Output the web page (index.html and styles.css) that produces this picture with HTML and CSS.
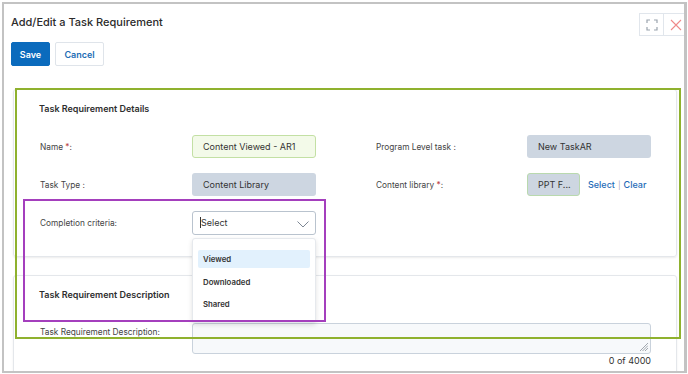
FILE: index.html
```html
<!DOCTYPE html>
<html lang="en">
<head>
    <meta charset="UTF-8">
    <meta name="viewport" content="width=device-width, initial-scale=1.0">
    <title>Add/Edit a Task Requirement</title>
    <link rel="stylesheet" href="styles.css">
</head>
<body>
    <div class="modal">
        <div class="modal-head">
            <h1>Add/Edit a Task Requirement</h1>
            <div class="win-tools">
                <span class="tool">
                    <svg width="12" height="12" viewBox="0 0 12 12" fill="none" stroke="#9aa3ad" stroke-width="1.2">
                        <path d="M1 4V1h3M8 1h3v3M11 8v3H8M4 11H1V8"/>
                    </svg>
                </span>
                <span class="tool">
                    <svg width="12" height="12" viewBox="0 0 12 12" fill="none" stroke="#ef8a8a" stroke-width="1.1">
                        <path d="M1 1l10 10M11 1L1 11"/>
                    </svg>
                </span>
            </div>
        </div>

        <div class="actions">
            <button class="btn btn-primary">Save</button>
            <button class="btn btn-light">Cancel</button>
        </div>

        <div class="card">
            <h2>Task Requirement Details</h2>
            <div class="form-grid">
                <label>Name <span class="req">*</span>:</label>
                <div class="field field-ok">Content Viewed - AR1</div>
                <label>Program Level task :</label>
                <div class="field field-ro">New TaskAR</div>

                <label>Task Type :</label>
                <div class="field field-ro">Content Library</div>
                <label>Content library <span class="req">*</span>:</label>
                <div class="lib-row">
                    <div class="field field-ro field-short">PPT F...</div>
                    <a class="link">Select</a><span class="sep">|</span><a class="link">Clear</a>
                </div>

                <label>Completion criteria:</label>
                <div class="select-wrap">
                    <div class="field select"><span class="caret"></span>Select
                        <svg class="chev" width="12" height="7" viewBox="0 0 12 7" fill="none" stroke="#7d8794" stroke-width="1">
                            <path d="M0.5 0.5L6 6L11.5 0.5"/>
                        </svg>
                    </div>
                    <ul class="menu">
                        <li class="active">Viewed</li>
                        <li>Downloaded</li>
                        <li>Shared</li>
                    </ul>
                </div>
            </div>
        </div>

        <div class="card card-desc">
            <h2>Task Requirement Description</h2>
            <div class="desc-row">
                <label>Task Requirement Description:</label>
                <div class="desc-box">
                    <div class="textarea">
                        <svg class="grip" width="9" height="9" viewBox="0 0 9 9" stroke="#8a929b" stroke-width="0.8">
                            <path d="M9 1L1 9M9 3.5L3.5 9M9 6L6 9"/>
                        </svg>
                    </div>
                    <div class="count">0 of 4000</div>
                </div>
            </div>
        </div>
    </div>

    <div class="mark mark-green"></div>
    <div class="mark mark-purple"></div>
</body>
</html>
```

FILE: styles.css
```css
body { margin: 0; font-family: Inter, "Noto Sans", sans-serif; color: #333; background: #fff; position: relative; width: 688px; height: 374px; overflow: hidden; }

.modal { margin: 2px; width: 680px; height: 367px; border: 2px solid #c3c3c3; border-right-width: 3px; overflow: hidden; background: #fff; }

.modal-head { display: flex; justify-content: space-between; align-items: flex-start; }
.modal-head h1 { margin: 11px 0 0 7px; font-size: 11px; font-weight: 500; line-height: 14px; color: #2b2b2b; }
.win-tools { display: flex; margin-top: 9px; margin-right: -4px; }
.tool { width: 23px; height: 21px; border: 1px solid #e1e6ec; display: flex; align-items: center; justify-content: center; }
.tool + .tool { border-left: none; }

.actions { display: flex; gap: 5px; margin: 6px 0 0 7px; }
.btn { font-family: Inter, sans-serif; font-size: 9px; font-weight: 600; height: 24px; border-radius: 2px; padding: 0; cursor: pointer; }
.btn-primary { width: 39px; background: #0b6bbd; color: #fff; border: 1px solid #0b6bbd; }
.btn-light { width: 49px; background: #fff; color: #1d6db5; border: 1px solid #dfe4ea; }

.card { margin: 23px 7px 0 9px; height: 154px; padding: 12px 0 0 25px; border: 1px solid #e4e7eb; border-radius: 3px; box-shadow: 0 1px 2px rgba(0,0,0,0.08); }
.card h2 { margin: 0; font-size: 9px; font-weight: 600; line-height: 14px; color: #2e2e2e; }
.card-desc { margin-top: 18px; height: 120px; }

.form-grid { display: grid; grid-template-columns: 153px 183px 152px auto; row-gap: 15px; margin-top: 19px; align-items: center; }
.form-grid label, .desc-row label { font-size: 8.3px; color: #444; padding-left: 1px; }
.req { color: #b44; }

.field { height: 23px; box-sizing: border-box; width: 124px; border-radius: 3px; font-size: 9px; line-height: 21px; padding-left: 10px; color: #333; border: 1px solid transparent; }
.field-ok { background: #f3fae9; border-color: #c3e0a4; }
.field-ro { background: #cdd6e1; }
.field-short { width: 53px; border-color: #b9d9ae; }

.lib-row { display: flex; align-items: center; }
.link { color: #1f6cb8; font-size: 9px; font-weight: 500; }
.lib-row .field + .link { margin-left: 8px; }
.sep { color: #aab; font-size: 8px; margin: 0 3px; }

.select-wrap { position: relative; }
.select { background: #fff; border-color: #b9c3ce; height: 24px; position: relative; padding-left: 7px; }
.caret { display: inline-block; width: 1px; height: 11px; background: #333; vertical-align: -2px; }
.chev { position: absolute; right: 6px; top: 9px; }

.menu { position: absolute; left: 0; top: 27px; width: 124px; box-sizing: border-box; margin: 0; padding: 11px 5px 9px 5px; list-style: none; background: #fff; border: 1px solid #e6e9ed; border-radius: 3px; box-shadow: 0 2px 5px rgba(0,0,0,0.12); z-index: 2; }
.menu li { height: 18px; line-height: 18px; padding-left: 5px; font-size: 7.8px; font-weight: 600; color: #333; border-radius: 2px; }
.menu li + li { margin-top: 4.5px; }
.menu li.active { background: #e2f1fd; }

.desc-row { display: grid; grid-template-columns: 153px auto; margin-top: 21px; }
.desc-row label { padding-top: 4px; }
.desc-box { width: 459px; }
.textarea { height: 31px; box-sizing: border-box; border: 1px solid #c9d2dc; border-radius: 3px; background: #f7f9fb; position: relative; }
.grip { position: absolute; right: 2px; bottom: 2px; }
.count { text-align: right; font-size: 9px; color: #333; margin-top: 1px; }

.mark { position: absolute; box-sizing: border-box; z-index: 5; }
.mark-green { left: 15px; top: 88px; width: 666px; height: 251px; border: 2px solid #8fb12e; }
.mark-purple { left: 23px; top: 199px; width: 303px; height: 123px; border: 2px solid #a43fbd; }
```
